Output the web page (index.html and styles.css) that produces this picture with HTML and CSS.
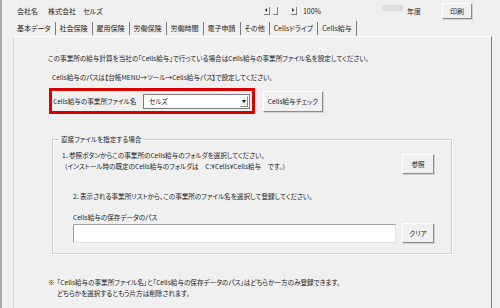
FILE: index.html
```html
<!DOCTYPE html>
<html lang="ja">
<head>
  <meta charset="UTF-8">
  <title>Cells給与</title>
  <link rel="stylesheet" href="styles.css">
</head>
<body>
  <div class="sheet">
    <div class="topbar">
      <span class="co-label">会社名</span>
      <span class="co-name">株式会社　セルズ</span>
      <div class="tools">
        <div class="zoom">
          <span class="sb-btn"><span class="tri left"></span></span>
          <span class="sb-thumb"></span>
          <span class="sb-track"></span>
          <span class="sb-btn"><span class="tri right"></span></span>
          <span class="zoom-val">100%</span>
        </div>
        <span class="year-box"></span>
        <span class="year">年度</span>
        <button class="btn print">印刷</button>
      </div>
    </div>

    <div class="tabs">
      <span class="tab">基本データ</span>
      <span class="tab">社会保険</span>
      <span class="tab">雇用保険</span>
      <span class="tab">労働保険</span>
      <span class="tab">労働時間</span>
      <span class="tab">電子申請</span>
      <span class="tab">その他</span>
      <span class="tab">Cellsドライブ</span>
      <span class="tab active">Cells給与</span>
    </div>

    <div class="panel">
      <p class="lead">この事業所の給与計算を当社の「Cells給与」で行っている場合はCells給与の事業所ファイル名を設定してください。</p>
      <p class="lead sub">Cells給与のパスは【台帳MENU→ツール→Cells給与パス】で設定してください。</p>

      <div class="file-row">
        <div class="highlight">
          <label class="file-label">Cells給与の事業所ファイル名</label>
          <div class="combo">
            <span class="combo-text">セルズ</span>
            <span class="combo-drop"><span class="tri down"></span></span>
          </div>
        </div>
        <button class="btn check">Cells給与チェック</button>
      </div>

      <fieldset class="direct">
        <legend>直接ファイルを指定する場合</legend>
        <div class="step-one">
          <div class="step-text">
            <div>1．参照ボタンからこの事業所のCells給与のフォルダを選択してください。</div>
            <div class="paren">（インストール時の既定のCells給与のフォルダは　C:¥Cells¥Cells給与　です。）</div>
          </div>
          <button class="btn side">参照</button>
        </div>
        <div class="step-two">2．表示される事業所リストから、この事業所のファイル名を選択して登録してください。</div>
        <div class="path-label">Cells給与の保存データのパス</div>
        <div class="path-row">
          <div class="path-input"></div>
          <button class="btn side">クリア</button>
        </div>
      </fieldset>

      <div class="note">
        <span class="mark">※</span>
        <div>
          <div>「Cells給与の事業所ファイル名」と「Cells給与の保存データのパス」はどちらか一方のみ登録できます。</div>
          <div class="note-2">どちらかを選択するともう片方は削除されます。</div>
        </div>
      </div>
    </div>
  </div>
</body>
</html>
```

FILE: styles.css
```css
* {
  box-sizing: border-box;
}

body {
  margin: 0;
  width: 500px;
  height: 308px;
  overflow: hidden;
  background-color: #f0f0f0;
  color: #222;
  font-family: "Noto Sans CJK JP", "Noto Sans", sans-serif;
  font-size: 7px;
  font-feature-settings: "palt";
}

p {
  margin: 0;
}

.sheet {
  height: 308px;
  border-left: 2px solid #a9a9a9;
  padding-left: 11px;
  display: flex;
  flex-direction: column;
}

/* top bar */
.topbar {
  height: 21px;
  display: flex;
  align-items: center;
  padding-left: 4px;
  padding-right: 28px;
}

.co-label {
  margin-right: 10px;
}

.tools {
  margin-left: auto;
  display: flex;
  align-items: center;
}

.zoom {
  display: flex;
  align-items: center;
  margin-right: 61px;
}

.sb-btn {
  width: 6px;
  height: 8px;
  border-right: 1px solid #808080;
  border-bottom: 1px solid #808080;
  display: flex;
  align-items: center;
  justify-content: center;
}

.sb-thumb {
  width: 5px;
  height: 8px;
  margin-left: 3px;
  border-right: 1px solid #808080;
  border-bottom: 1px solid #808080;
}

.sb-track {
  width: 13px;
}

.zoom-val {
  margin-left: 6px;
}

.year-box {
  width: 21px;
  height: 6px;
  margin-right: 4px;
  margin-top: -6px;
  background-color: #dedede;
}

.year {
  margin-right: 21px;
}

.tri {
  width: 0;
  height: 0;
  border: 2px solid transparent;
}

.tri.left {
  border-right-color: #222;
  border-left-width: 0;
}

.tri.right {
  border-left-color: #222;
  border-right-width: 0;
}

.tri.down {
  border-width: 3px 2.5px 0;
  border-top-color: #111;
}

/* buttons */
.btn {
  font: inherit;
  color: inherit;
  padding: 0;
  background-color: #f0f0f0;
  border: 1px solid;
  border-color: #fff #8c8c8c #8c8c8c #fff;
  box-shadow: 1px 1px 0 #d0d0d0;
}

.print {
  width: 30px;
  height: 16px;
}

/* tabs */
.tabs {
  height: 15px;
  display: flex;
  align-items: center;
}

.tab {
  padding: 0 4px;
  line-height: 13px;
  border-right: 1px solid #7a7a7a;
}

.tab.active {
  line-height: 15px;
}

/* panel */
.panel {
  flex: 1;
  margin-right: 8px;
  border-top: 1px solid #fff;
  border-left: 1px solid #dcdcdc;
  border-right: 1px solid #7f7f7f;
  font-size: 6.6px;
}

.lead {
  line-height: 10px;
  margin: 16px 0 0 34px;
}

.lead.sub {
  margin: 9px 0 0 38px;
}

.file-row {
  display: flex;
  align-items: center;
  margin: 6px 0 0 35px;
}

.highlight {
  width: 206px;
  height: 26px;
  border: 3px solid #d80000;
  display: flex;
  align-items: center;
  padding-left: 1px;
}

.file-label {
  width: 90px;
}

.combo {
  width: 107px;
  height: 15px;
  background-color: #fff;
  border: 1px solid #7a7a7a;
  display: flex;
  align-items: center;
  padding-left: 5px;
}

.combo-text {
  flex: 1;
}

.combo-drop {
  width: 8px;
  height: 11px;
  margin-right: 1px;
  background-color: #f0f0f0;
  border: 1px solid;
  border-color: #fff #8c8c8c #8c8c8c #fff;
  display: flex;
  align-items: center;
  justify-content: center;
}

.check {
  width: 60px;
  height: 21px;
  margin-left: 8px;
}

/* direct file group */
.direct {
  width: 400px;
  height: 120px;
  margin: 20px 0 0 38px;
  padding: 0;
  border: 1px solid #cfcfcf;
  box-shadow: inset 1px 1px 0 #fff, 1px 1px 0 #fff;
}

.direct legend {
  margin-left: 6px;
  padding: 0 2px;
  line-height: 10px;
}

.step-one {
  display: flex;
  align-items: flex-start;
  margin: 6px 17px 0 9px;
  line-height: 11px;
}

.step-text {
  flex: 1;
}

.paren {
  padding-left: 2px;
}

.side {
  width: 32px;
  height: 20px;
  margin-top: 4px;
}

.step-two {
  line-height: 11px;
  margin: 17px 0 0 20px;
}

.path-label {
  line-height: 11px;
  margin: 10px 0 0 20px;
}

.path-row {
  display: flex;
  align-items: center;
  margin: 1px 0 0 20px;
}

.path-input {
  width: 323px;
  height: 19px;
  background-color: #fff;
  border: 1px solid;
  border-color: #a0a0a0 #e3e3e3 #e3e3e3 #a0a0a0;
}

.path-row .side {
  margin: -2px 0 0 6px;
}

/* note */
.note {
  display: flex;
  line-height: 11px;
  margin: 23px 0 0 34px;
}

.mark {
  width: 9px;
}
```
